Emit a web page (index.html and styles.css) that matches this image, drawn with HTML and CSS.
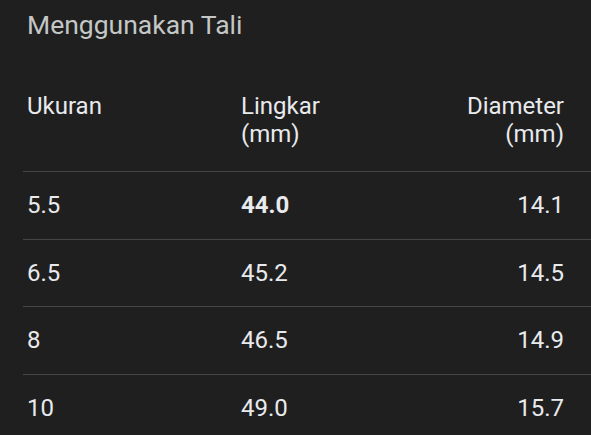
FILE: index.html
```html
<!DOCTYPE html>
<html lang="id">
<head>
<meta charset="utf-8">
<title>Menggunakan Tali</title>
<link rel="stylesheet" href="styles.css">
</head>
<body>
<main class="page">
  <h2 class="title">Menggunakan Tali</h2>
  <div class="table">
    <div class="row head">
      <div class="cell">Ukuran</div>
      <div class="cell">Lingkar<br>(mm)</div>
      <div class="cell num">Diameter<br>(mm)</div>
    </div>
    <div class="row">
      <div class="cell">5.5</div>
      <div class="cell strong">44.0</div>
      <div class="cell num">14.1</div>
    </div>
    <div class="row">
      <div class="cell">6.5</div>
      <div class="cell">45.2</div>
      <div class="cell num">14.5</div>
    </div>
    <div class="row">
      <div class="cell">8</div>
      <div class="cell">46.5</div>
      <div class="cell num">14.9</div>
    </div>
    <div class="row">
      <div class="cell">10</div>
      <div class="cell">49.0</div>
      <div class="cell num">15.7</div>
    </div>
  </div>
</main>
</body>
</html>
```

FILE: styles.css
```css
html, body {
  margin: 0;
  padding: 0;
  background: #1f1f1f;
  overflow: hidden;
}

.page {
  font-family: Roboto, "Liberation Sans", sans-serif;
  color: #e8eaed;
  width: 591px;
  height: 435px;
}

.title {
  margin: 0;
  padding: 9px 0 0 27px;
  font-size: 26.5px;
  line-height: 32px;
  font-weight: 400;
  color: #c4c7c5;
}

.table {
  margin: 51px 0 0 23px;
}

.row {
  display: grid;
  grid-template-columns: 214px 1fr 1fr;
  align-items: center;
  padding: 0 27px 0 4px;
  height: 67.5px;
  box-sizing: border-box;
  border-top: 1px solid #454545;
  font-size: 24px;
  line-height: 28px;
}

.row.head {
  height: auto;
  align-items: start;
  border-top: none;
  padding-bottom: 23px;
}

.cell.num {
  text-align: right;
}

.cell.strong {
  font-weight: 700;
}
```
